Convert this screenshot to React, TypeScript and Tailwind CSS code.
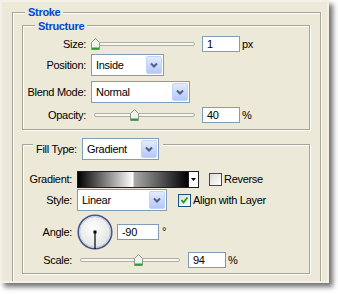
import type React from 'react'

const groupBox =
  'relative border border-[#A5A497] shadow-[1px_1px_0_#fff,inset_1px_1px_0_#fff]'

function Chevron() {
  return (
    <div className="flex w-[16px] items-center justify-center rounded-[2px] border border-[#C3D3FD] bg-gradient-to-b from-[#E3EBFE] to-[#B4C8F6]">
      <svg width="8" height="6" viewBox="0 0 8 6">
        <path d="M1 1.5 L4 4.5 L7 1.5" fill="none" stroke="#4D6185" strokeWidth="2" />
      </svg>
    </div>
  )
}

function Select({ value, className }: { value: string; className: string }) {
  return (
    <div className={`flex h-[22px] border border-[#7F9DB9] bg-white p-[1px] ${className}`}>
      <span className="flex flex-1 items-center pl-[3px]">{value}</span>
      <Chevron />
    </div>
  )
}

function Field({ value, className }: { value: string; className: string }) {
  return (
    <div className={`flex h-[16px] items-center border border-[#7F9DB9] bg-white pl-[4px] ${className}`}>
      {value}
    </div>
  )
}

function Thumb() {
  return (
    <svg width="9" height="12" viewBox="0 0 9 12">
      <path d="M0.5 4.5 L4.5 0.5 L8.5 4.5 V11.5 H0.5 Z" fill="#F3F3EE" stroke="#8A9A8A" />
      <path d="M1 10.5 H8" stroke="#22A222" strokeWidth="2" />
    </svg>
  )
}

function Slider({ className, thumbLeft }: { className: string; thumbLeft: number }) {
  return (
    <div className={`relative h-[16px] ${className}`}>
      <div className="ml-[3px] mr-[1px] mt-[6px] h-[4px] rounded-[2px] border border-[#B0AEA2] bg-[#F7F7F3]" />
      <div className="absolute top-[2px]" style={{ left: thumbLeft }}>
        <Thumb />
      </div>
    </div>
  )
}

function Checkbox({ checked }: { checked?: boolean }) {
  return (
    <div className="flex h-[13px] w-[13px] items-center justify-center border border-[#1C5180] bg-gradient-to-br from-[#DCDCD7] to-white">
      {checked && (
        <svg width="9" height="9" viewBox="0 0 9 9">
          <path d="M1.5 4 L3.5 6.5 L7.5 1.5" fill="none" stroke="#21A121" strokeWidth="2" />
        </svg>
      )}
    </div>
  )
}

function Dial() {
  return (
    <svg width="36" height="36" viewBox="0 0 36 36">
      <defs>
        <radialGradient id="dialFill" cx="45%" cy="40%" r="60%">
          <stop offset="0%" stopColor="#ffffff" />
          <stop offset="100%" stopColor="#E2E2E0" />
        </radialGradient>
      </defs>
      <circle cx="18" cy="18" r="16.8" fill="url(#dialFill)" stroke="#4A5889" strokeWidth="1.6" />
      <circle cx="18" cy="18" r="15.4" fill="none" stroke="#B9C0D6" strokeWidth="0.8" />
      <path d="M18 18 V35" stroke="#000" strokeWidth="1.2" />
      <rect x="16.5" y="16.5" width="3" height="3" fill="#000" />
    </svg>
  )
}

function Row({
  label,
  labelW,
  className,
  children,
}: {
  label: string
  labelW: string
  className: string
  children: React.ReactNode
}) {
  return (
    <div className={`flex items-center ${className}`}>
      <span className={`text-right ${labelW}`}>{label}</span>
      <div className="ml-[5px] flex items-center">{children}</div>
    </div>
  )
}

export default function App() {
  return (
    <div className="h-[294px] w-[338px] overflow-hidden bg-white font-['Liberation_Sans',Arial,sans-serif] text-[11px] tracking-[-0.3px] text-black">
      <div className="h-[283px] w-[329px] overflow-hidden border-2 border-[#F3F1E7] bg-[#ECE9D8] pl-[10px] pt-[10px] shadow-[4px_4px_5px_rgba(0,0,0,0.55)]">
        <div className={`${groupBox} h-[300px] w-[309px] pl-[9px] pt-[12px]`}>
          <span className="absolute left-[12px] top-[-8px] bg-[#ECE9D8] px-[3px] font-bold leading-[14px] text-[#0046D5]">
            Stroke
          </span>

          <div className={`${groupBox} h-[105px] w-[288px] pt-[10px]`}>
            <span className="absolute left-[12px] top-[-7px] bg-[#ECE9D8] px-[3px] font-bold leading-[14px] text-[#0046D5]">
              Structure
            </span>
            <Row label="Size:" labelW="w-[63px]" className="h-[16px]">
              <Slider className="w-[105px]" thumbLeft={0} />
              <Field value="1" className="ml-[6px] w-[38px]" />
              <span className="ml-[2px]">px</span>
            </Row>
            <Row label="Position:" labelW="w-[63px]" className="mt-[2px] h-[22px]">
              <Select value="Inside" className="w-[73px]" />
            </Row>
            <Row label="Blend Mode:" labelW="w-[63px]" className="mt-[5px] h-[22px]">
              <Select value="Normal" className="w-[99px]" />
            </Row>
            <Row label="Opacity:" labelW="w-[63px]" className="mt-[4px] h-[16px]">
              <Slider className="w-[105px]" thumbLeft={39} />
              <Field value="40" className="ml-[6px] w-[38px]" />
              <span className="ml-[2px]">%</span>
            </Row>
          </div>

          <div className={`${groupBox} mt-[14px] h-[130px] w-[288px] pt-[26px]`}>
            <div className="absolute left-[10px] top-[-7px] flex items-center bg-[#ECE9D8] pl-[3px] pr-[4px]">
              <span className="w-[46px]">Fill Type:</span>
              <Select value="Gradient" className="w-[77px]" />
            </div>
            <Row label="Gradient:" labelW="w-[49px]" className="h-[17px]">
              <div className="flex h-[17px] w-[122px] border border-[#1E1E1E]">
                <div className="flex-1 bg-[linear-gradient(to_right,#000_0%,#fff_50%,#a9a9a9_51%,#000_100%)]" />
                <div className="flex w-[10px] items-center justify-center border-l border-[#1E1E1E] bg-white">
                  <svg width="5" height="3" viewBox="0 0 5 3">
                    <path d="M0 0 H5 L2.5 3 Z" fill="#000" />
                  </svg>
                </div>
              </div>
              <div className="ml-[10px] flex items-center">
                <Checkbox />
                <span className="ml-[2px]">Reverse</span>
              </div>
            </Row>
            <Row label="Style:" labelW="w-[49px]" className="mt-[1px] h-[22px]">
              <Select value="Linear" className="w-[90px]" />
              <div className="ml-[11px] flex items-center">
                <Checkbox checked />
                <span className="ml-[2px]">Align with Layer</span>
              </div>
            </Row>
            <Row label="Angle:" labelW="w-[49px]" className="mt-[3px] h-[36px]">
              <Dial />
              <Field value="-90" className="ml-[4px] w-[42px]" />
              <span className="mb-[2px] ml-[3px]">°</span>
            </Row>
            <Row label="Scale:" labelW="w-[49px]" className="mt-[2px] h-[16px]">
              <Slider className="w-[104px]" thumbLeft={57} />
              <Field value="94" className="ml-[7px] w-[38px]" />
              <span className="ml-[2px]">%</span>
            </Row>
          </div>
        </div>
      </div>
    </div>
  )
}
